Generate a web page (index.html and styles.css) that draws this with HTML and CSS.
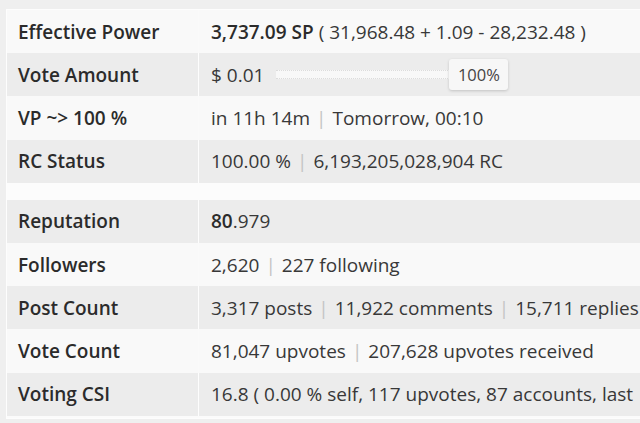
FILE: index.html
```html
<!DOCTYPE html>
<html>
<head>
<meta charset="utf-8">
<link rel="stylesheet" href="styles.css">
</head>
<body>
<div class="page">
  <div class="table">
    <div class="row odd"><div class="label">Effective Power</div><div class="value"><b>3,737.09 SP</b> ( 31,968.48 + 1.09 - 28,232.48 )</div></div>
    <div class="row even"><div class="label">Vote Amount</div><div class="value">$ 0.01 <span class="slider"><span class="track"></span><span class="tip">100%</span></span></div></div>
    <div class="row odd"><div class="label">VP ~&gt; 100 %</div><div class="value">in 11h 14m <span class="sep">|</span> Tomorrow, 00:10</div></div>
    <div class="row even"><div class="label">RC Status</div><div class="value">100.00 % <span class="sep">|</span> 6,193,205,028,904 RC</div></div>
    <div class="spacer"></div>
    <div class="row even"><div class="label">Reputation</div><div class="value"><b class="tight">80</b>.979</div></div>
    <div class="row odd"><div class="label">Followers</div><div class="value">2,620 <span class="sep">|</span> 227 following</div></div>
    <div class="row even"><div class="label">Post Count</div><div class="value">3,317 posts <span class="sep">|</span> 11,922 comments <span class="sep">|</span> 15,711 replies</div></div>
    <div class="row odd"><div class="label">Vote Count</div><div class="value">81,047 upvotes <span class="sep">|</span> 207,628 upvotes received</div></div>
    <div class="row even"><div class="label">Voting CSI</div><div class="value">16.8 ( 0.00 % self, 117 upvotes, 87 accounts, last</div></div>
  </div>
</div>
</body>
</html>
```
FILE: styles.css
```css
html, body {
  margin: 0;
  padding: 0;
}
body {
  background: #efefef;
  font-family: "Open Sans", "Noto Sans", sans-serif;
  color: #333;
  width: 640px;
  height: 423px;
  overflow: hidden;
}
.page {
  padding: 9px 0 0 6px;
}
.table {
  width: 760px;
  background: #fbfbfb;
  border: 1px solid #fdfdfd;
  border-right: none;
  padding-bottom: 2px;
}
.row {
  display: grid;
  grid-template-columns: 191px 1fr;
  column-gap: 1px;
  height: 43.2px;
  font-size: 19px;
  white-space: nowrap;
}
.row.odd { background: #fafafa; }
.row.even { background: #fdfdfd; }
.row.even .label, .row.even .value { background: #ececec; }
.row.odd .label, .row.odd .value { background: #f9f9f9; }
.label, .value {
  display: flex;
  align-items: center;
}
.label {
  padding-left: 11px;
  font-weight: 600;
  color: #2b2b2b;
}
.value {
  padding-left: 12px;
  color: #383838;
}
.value b {
  font-weight: 600;
  color: #2b2b2b;
  margin-right: 5px;
}
.value b.tight { margin-right: 0; }
.sep {
  color: #c4c4c4;
  margin: 0 6px;
}
.spacer {
  height: 17px;
  background: #fcfcfc;
}
.slider {
  display: inline-flex;
  align-items: center;
  margin-left: 12px;
}
.track {
  width: 174px;
  height: 7px;
  background: #f8f8f8;
  border-top: 1px dotted #dcdcdc;
  border-bottom: 1px dotted #dcdcdc;
}
.tip {
  display: inline-block;
  width: 59px;
  height: 31px;
  line-height: 31px;
  text-align: center;
  font-size: 16.5px;
  color: #444;
  background: #f7f7f7;
  border-radius: 3px;
  box-shadow: 0 1px 3px rgba(0,0,0,0.18);
  margin-left: -1px;
}
```
